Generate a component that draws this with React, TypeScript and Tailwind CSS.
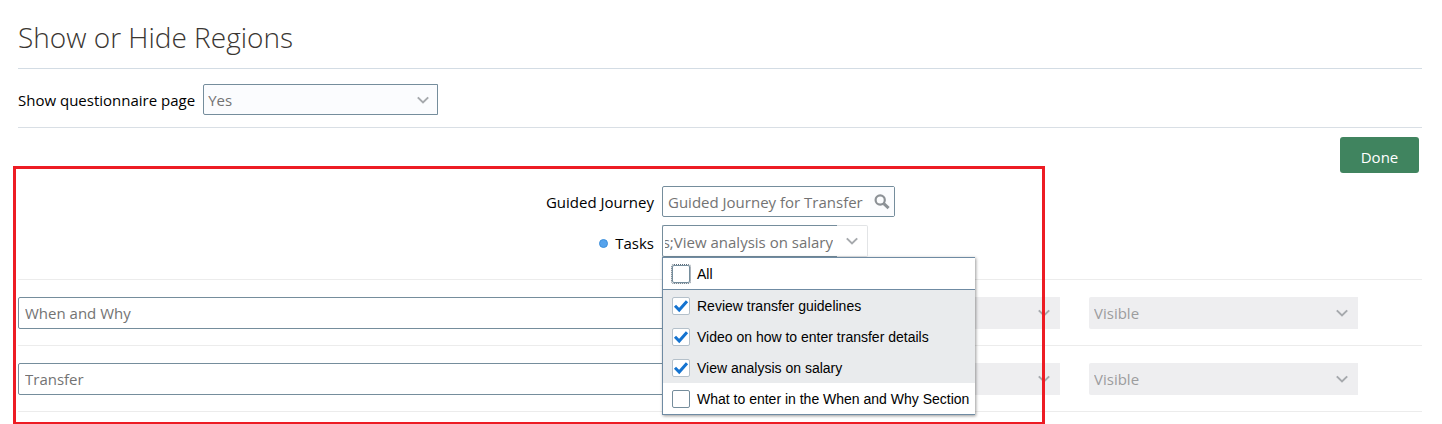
import { useState, type ReactNode } from "react";

const tasks = [
  { name: "Review transfer guidelines", checked: true },
  { name: "Video on how to enter transfer details", checked: true },
  { name: "View analysis on salary", checked: true },
  { name: "What to enter in the When and Why Section", checked: false },
];

const regions = ["When and Why", "Transfer"];

function Chevron() {
  return (
    <svg
      viewBox="0 0 12 8"
      className="pointer-events-none h-2 w-3 fill-none stroke-[#a6a9ad] stroke-2"
      aria-hidden="true"
    >
      <path d="M0.8 1.4 L6 6.4 L11.2 1.4" />
    </svg>
  );
}

function SearchIcon() {
  return (
    <svg viewBox="0 0 16 16" className="size-4 fill-none stroke-[#8c9196]" aria-hidden="true">
      <circle cx="6.2" cy="6" r="4.6" strokeWidth="2.2" />
      <path d="M9.8 9.6 L14.6 14.2" strokeWidth="3" />
    </svg>
  );
}

function RegionSelect({ label, value }: { label: string; value: string }) {
  return (
    <div className="grid w-[269px] shrink-0 items-center">
      <select
        aria-label={label}
        disabled
        className="col-start-1 row-start-1 h-8 w-full appearance-none rounded-l-xs bg-[#eeeef0] px-[5px] text-[#9c9c9e] opacity-100"
      >
        <option>{value}</option>
      </select>
      <span className="col-start-1 row-start-1 mr-2.5 justify-self-end">
        <Chevron />
      </span>
    </div>
  );
}

function TaskOption({ name, initial, focused }: { name: string; initial: boolean; focused?: boolean }) {
  const [checked, setChecked] = useState(initial);
  return (
    <label
      className={
        "flex h-[31px] items-center gap-[7px] pl-[9px] whitespace-nowrap " +
        (checked ? "bg-[#e9ebed]" : "bg-white")
      }
    >
      <span className="grid place-items-center">
        <input
          type="checkbox"
          checked={checked}
          onChange={(e) => setChecked(e.target.checked)}
          className={
            "col-start-1 row-start-1 size-[18px] appearance-none rounded-xs border bg-white " +
            (checked ? "border-[#b4c0ca] " : "border-[#758d9c] ") +
            (focused ? "outline-1 outline-dotted outline-[#5d6b78]" : "")
          }
        />
        {checked && (
          <svg
            viewBox="0 0 18 18"
            className="pointer-events-none col-start-1 row-start-1 size-[18px] fill-none stroke-[#1473d0] stroke-3"
            aria-hidden="true"
          >
            <path d="M3 8.8 L7.2 13 L15 4.2" />
          </svg>
        )}
      </span>
      {name}
    </label>
  );
}

function Row({ children }: { children: ReactNode }) {
  return <div className="flex items-center gap-[29px] border-b border-[#ececec] pt-[17px] pr-16 pb-4">{children}</div>;
}

export default function App() {
  return (
    <main className="relative min-h-screen bg-white pr-5 pl-[18px] font-['Open_Sans','Noto_Sans',sans-serif] text-[15px] leading-5 text-black">
      <h1 className="border-b border-[#d3dce4] pt-[19px] pb-[13px] text-[28px] leading-9 font-light text-[#3a3632]">
        Show or Hide Regions
      </h1>

      <div className="flex items-center gap-2 border-b border-[#d9dfe5] pt-[15px] pb-3">
        <label htmlFor="questionnaire">Show questionnaire page</label>
        <div className="grid w-[235px] items-center">
          <select
            id="questionnaire"
            className="col-start-1 row-start-1 h-[31px] w-full appearance-none rounded-l-xs border border-[#758d9c] bg-[#fbfcfe] px-1 text-[#737373]"
          >
            <option>Yes</option>
            <option>No</option>
          </select>
          <span className="col-start-1 row-start-1 mr-[9px] justify-self-end">
            <Chevron />
          </span>
        </div>
      </div>

      <div className="flex justify-end pt-[9px] pr-[3px]">
        <button type="button" className="h-9 w-[79px] rounded-[3px] bg-[#40845f] pt-1 text-white">
          Done
        </button>
      </div>

      <div className="grid grid-cols-[636px_1fr] items-center gap-x-2 gap-y-2 border-b border-[#ececec] pt-[13px] pb-[22px]">
        <label htmlFor="journey" className="text-right">
          Guided Journey
        </label>
        <div className="flex h-[31px] w-[233px] items-center rounded-xs border border-[#758d9c] bg-white">
          <input
            id="journey"
            defaultValue="Guided Journey for Transfer"
            className="h-full min-w-0 flex-1 pl-[5px] text-[#737373] outline-none"
          />
          <button
            type="button"
            aria-label="Search guided journeys"
            className="flex h-full w-6 items-center justify-center bg-[#fbfcfe]"
          >
            <SearchIcon />
          </button>
        </div>

        <label htmlFor="tasks" className="flex items-center justify-end gap-[7px] pt-1">
          <span className="size-[9px] rounded-full border border-[#3d8fdb] bg-[#56a3ec]" />
          Tasks
        </label>
        <div className="relative flex h-8 w-[206px]">
          <input
            id="tasks"
            readOnly
            defaultValue="s;View analysis on salary"
            className="h-full w-[175px] rounded-l-xs border-y border-l border-[#758d9c] bg-white pt-0.5 pr-1 pl-0.5 text-[#737373] outline-none [direction:rtl]"
          />
          <button
            type="button"
            aria-label="Open task list"
            className="flex flex-1 items-center justify-center rounded-r-xs border-y border-r border-[#e2e4e6]"
          >
            <Chevron />
          </button>
          <div className="absolute top-full left-0 z-20 w-[313px] border-y border-l border-[#6f8ba3] bg-white font-['Liberation_Sans',Arial,sans-serif] text-[14px] shadow-[1px_1px_3px_rgba(0,0,0,0.4)]">
            <div className="border-b border-[#6f8ba3]">
              <TaskOption name="All" initial={false} focused />
            </div>
            {tasks.map((task) => (
              <TaskOption key={task.name} name={task.name} initial={task.checked} />
            ))}
          </div>
        </div>
      </div>

      {regions.map((region) => (
        <Row key={region}>
          <input
            aria-label="Region"
            defaultValue={region}
            className="h-8 min-w-0 flex-1 rounded-xs border border-[#758d9c] bg-white px-1.5 text-[#737373]"
          />
          <RegionSelect label={`${region} requirement`} value="" />
          <RegionSelect label={`${region} visibility`} value="Visible" />
        </Row>
      ))}

      <div className="pointer-events-none absolute top-[166px] left-[13px] z-30 h-[258px] w-[1032px] border-3 border-b-2 border-[#ed1c24]" />
    </main>
  );
}
